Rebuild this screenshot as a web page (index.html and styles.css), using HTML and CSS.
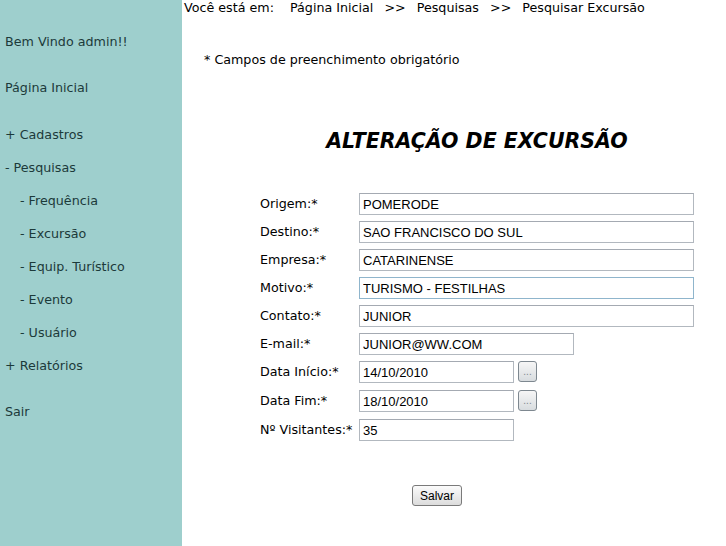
FILE: index.html
```html
<!DOCTYPE html>
<html lang="pt-BR">
<head>
    <meta charset="UTF-8">
    <title>Alteração de Excursão</title>
    <link rel="stylesheet" href="styles.css">
</head>
<body>

<div class="menu">
    <p class="welcome">Bem Vindo admin!!</p>
    <a class="item home" href="#">Página Inicial</a>
    <a class="item group" href="#">+ Cadastros</a>
    <a class="item" href="#">- Pesquisas</a>
    <a class="item sub" href="#">- Frequência</a>
    <a class="item sub" href="#">- Excursão</a>
    <a class="item sub" href="#">- Equip. Turístico</a>
    <a class="item sub" href="#">- Evento</a>
    <a class="item sub" href="#">- Usuário</a>
    <a class="item" href="#">+ Relatórios</a>
    <a class="item exit" href="#">Sair</a>
</div>

<div class="main">
    <div class="breadcrumb">
        <span class="here">Você está em:</span>
        <a href="#">Página Inicial</a>
        <span class="sep">&gt;&gt;</span>
        <a href="#">Pesquisas</a>
        <span class="sep">&gt;&gt;</span>
        <a href="#">Pesquisar Excursão</a>
    </div>

    <p class="required">* Campos de preenchimento obrigatório</p>

    <div class="content">
        <h1>ALTERAÇÃO DE EXCURSÃO</h1>

        <table class="form">
            <tr>
                <td class="label">Origem:*</td>
                <td><input type="text" class="wide" value="POMERODE"></td>
            </tr>
            <tr>
                <td class="label">Destino:*</td>
                <td><input type="text" class="wide" value="SAO FRANCISCO DO SUL"></td>
            </tr>
            <tr>
                <td class="label">Empresa:*</td>
                <td><input type="text" class="wide" value="CATARINENSE"></td>
            </tr>
            <tr>
                <td class="label">Motivo:*</td>
                <td><input type="text" class="wide focus" value="TURISMO - FESTILHAS"></td>
            </tr>
            <tr>
                <td class="label">Contato:*</td>
                <td><input type="text" class="wide" value="JUNIOR"></td>
            </tr>
            <tr>
                <td class="label">E-mail:*</td>
                <td><input type="text" class="medium" value="JUNIOR@WW.COM"></td>
            </tr>
            <tr class="date-row">
                <td class="label">Data Início:*</td>
                <td><input type="text" class="short" value="14/10/2010"><button class="pick">...</button></td>
            </tr>
            <tr class="date-row">
                <td class="label">Data Fim:*</td>
                <td><input type="text" class="short" value="18/10/2010"><button class="pick">...</button></td>
            </tr>
            <tr>
                <td class="label">Nº Visitantes:*</td>
                <td><input type="text" class="short" value="35"></td>
            </tr>
        </table>

        <div class="actions">
            <button class="save">Salvar</button>
        </div>
    </div>
</div>

</body>
</html>
```

FILE: styles.css
```css
body {
    margin: 0;
    font-family: Verdana, "DejaVu Sans", sans-serif;
    font-size: 12.7px;
    color: #000000;
    background-color: #ffffff;
    display: flex;
    min-height: 546px;
}

a {
    color: inherit;
    text-decoration: none;
}

.menu {
    width: 182px;
    flex-shrink: 0;
    background-color: #9ecfcd;
    color: #1c3a3a;
    display: flex;
    flex-direction: column;
    padding-top: 34px;
}

.welcome {
    margin: 0 0 0 5px;
    line-height: 16px;
}

.item {
    display: block;
    padding-left: 5px;
    line-height: 16px;
    margin-top: 17px;
}

.home {
    margin-top: 30px;
}

.group {
    margin-top: 31px;
}

.exit {
    margin-top: 30px;
}

.sub {
    padding-left: 20px;
}

.main {
    flex: 1;
}

.breadcrumb {
    padding-left: 2px;
    line-height: 15px;
    white-space: nowrap;
}

.breadcrumb .here {
    margin-right: 12px;
}

.breadcrumb .sep {
    margin: 0 7px;
}

.required {
    margin: 37px 0 0 22px;
    line-height: 15px;
}

.content {
    width: 434px;
    margin-left: 78px;
}

h1 {
    margin: 62px 0 0;
    text-align: center;
    font-size: 20.5px;
    font-style: italic;
    font-weight: bold;
    line-height: 24px;
}

.form {
    border-collapse: collapse;
    margin-top: 40px;
}

.form td {
    padding: 0;
    height: 28px;
    vertical-align: top;
}

.form .date-row td {
    height: 29px;
}

.form .label {
    width: 99px;
    line-height: 22px;
    white-space: nowrap;
}

input {
    box-sizing: border-box;
    height: 22px;
    border: 1px solid #b2b8bf;
    border-top-color: #a4aab2;
    padding: 1px 3px;
    font-family: Arial, "Liberation Sans", sans-serif;
    font-size: 13px;
    color: #000000;
    background-color: #ffffff;
    vertical-align: top;
}

input.focus {
    border-color: #8fb5cc;
}

.wide {
    width: 335px;
}

.medium {
    width: 215px;
}

.short {
    width: 155px;
}

.pick {
    box-sizing: border-box;
    width: 19px;
    height: 21px;
    margin-left: 4px;
    padding: 0;
    border: 1px solid #7e8890;
    border-radius: 3px;
    background: linear-gradient(#f6f6f6, #d8dcdf);
    font-family: Arial, "Liberation Sans", sans-serif;
    font-size: 10px;
    color: #808890;
    vertical-align: top;
}

.actions {
    text-align: center;
    margin-top: 38px;
    padding-right: 80px;
}

.save {
    box-sizing: border-box;
    width: 50px;
    height: 21px;
    padding: 0;
    border: 1px solid #7a7a7a;
    border-radius: 3px;
    background: linear-gradient(#fbfbfb, #dcdcdc);
    font-family: Arial, "Liberation Sans", sans-serif;
    font-size: 12px;
    color: #000000;
}
```
